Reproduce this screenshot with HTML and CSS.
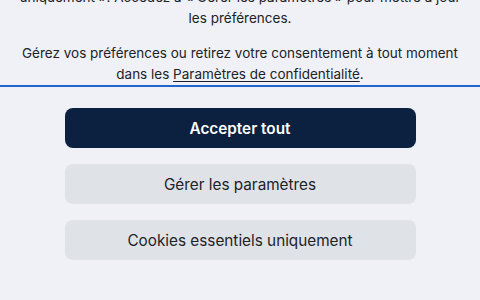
FILE: index.html
```html
<!DOCTYPE html>
<html lang="fr">
<head>
<meta charset="utf-8">
<link rel="stylesheet" href="styles.css">
</head>
<body>
<div class="page">
  <section class="info">
    <p class="para">uniquement ». Accédez à « Gérer les paramètres » pour mettre à jour les préférences.</p>
    <p class="para">Gérez vos préférences ou retirez votre consentement à tout moment dans les <a class="link" href="#">Paramètres de confidentialité</a>.</p>
  </section>
  <div class="actions">
    <button class="btn btn-primary">Accepter tout</button>
    <button class="btn btn-secondary">Gérer les paramètres</button>
    <button class="btn btn-secondary">Cookies essentiels uniquement</button>
  </div>
</div>
</body>
</html>
```
FILE: styles.css
```css
html, body {
  margin: 0;
  padding: 0;
  background: #eff1f6;
  height: 100%;
  overflow: hidden;
}
body {
  font-family: Inter, "Noto Sans", sans-serif;
  color: #222226;
}
.page {
  display: flex;
  flex-direction: column;
}
.info {
  margin-top: -13px;
  padding: 0 10px;
  text-align: center;
  font-size: 13.5px;
  line-height: 21px;
  border-bottom: 2px solid #1f66cf;
}
.para {
  margin: 0 0 14px;
}
.para:last-child {
  margin-bottom: 0;
}
.link {
  color: inherit;
  text-decoration: underline;
  text-decoration-thickness: 1px;
  text-underline-offset: 2px;
}
.actions {
  display: flex;
  flex-direction: column;
  align-items: center;
  gap: 16px;
  padding-top: 21px;
}
.btn {
  width: 351px;
  height: 40px;
  border: none;
  border-radius: 8px;
  font-family: Inter, "Noto Sans", sans-serif;
  font-size: 15.3px;
  cursor: pointer;
}
.btn-primary {
  background: #0b213f;
  color: #ffffff;
  font-weight: 600;
}
.btn-secondary {
  background: #dfe2e7;
  color: #222226;
  font-weight: 400;
}
```
